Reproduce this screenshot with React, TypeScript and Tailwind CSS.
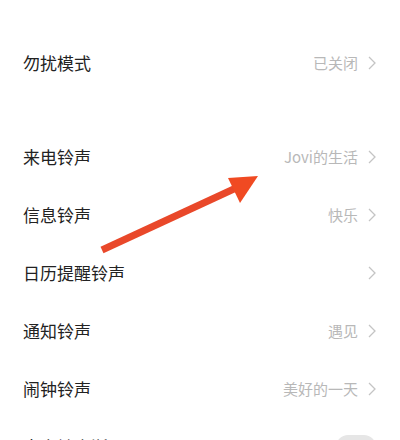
const rows = [
  { label: '来电铃声', value: 'Jovi的生活' },
  { label: '信息铃声', value: '快乐' },
  { label: '日历提醒铃声', value: '' },
  { label: '通知铃声', value: '遇见' },
  { label: '闹钟铃声', value: '美好的一天' },
];

function Chevron() {
  return (
    <svg viewBox="0 0 8 14" className="ml-[10px] h-[14px] w-[8px]" fill="none">
      <path d="M1 1l6 6-6 6" stroke="#c4c4c4" strokeWidth="1.3" />
    </svg>
  );
}

function Row({ label, value }: { label: string; value: string }) {
  return (
    <div className="flex h-[58px] items-center justify-between pl-[23px] pr-[24px]">
      <span className="text-[17px] text-[#222]">{label}</span>
      <div className="flex items-center">
        {value && <span className="text-[15px] text-[#b8b8b8]">{value}</span>}
        <Chevron />
      </div>
    </div>
  );
}

export default function App() {
  return (
    <div
      className="relative h-[440px] w-[400px] overflow-hidden bg-white"
      style={{ fontFamily: '"Noto Sans CJK SC", "Noto Sans", sans-serif' }}
    >
      <div className="pt-[34px]">
        <Row label="勿扰模式" value="已关闭" />
        <div className="h-[36px]" />
        {rows.map((r) => (
          <Row key={r.label} label={r.label} value={r.value} />
        ))}
        <div className="flex h-[58px] items-center justify-between pl-[23px] pr-[24px]">
          <span className="text-[17px] text-[#222]">来电铃声渐强</span>
          <div className="h-[24px] w-[40px] rounded-full bg-[#e6e6e6]" />
        </div>
      </div>

      {/* Arrow overlay */}
      <svg className="pointer-events-none absolute left-0 top-0" width="400" height="440" viewBox="0 0 400 440">
        <line x1="102" y1="250" x2="236" y2="188" stroke="#e9482a" strokeWidth="7" strokeLinecap="butt" />
        <polygon points="258,176 228,178 240,203" fill="#f04a22" />
      </svg>
    </div>
  );
}
